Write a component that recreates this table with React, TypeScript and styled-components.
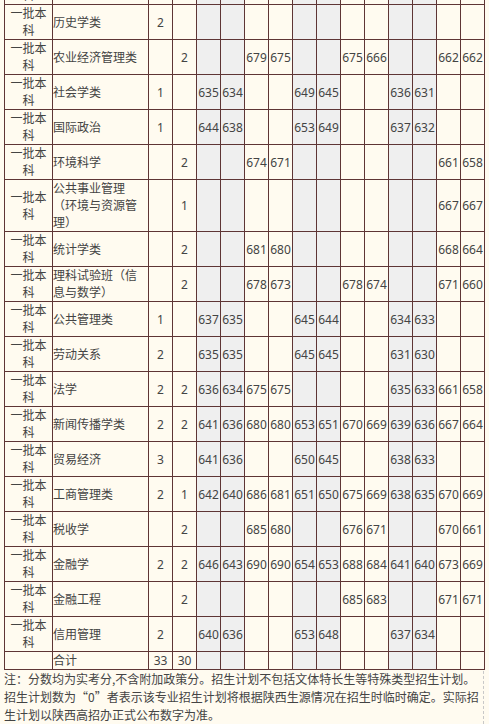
import React from "react";
import styled, { createGlobalStyle } from "styled-components";

const GlobalStyle = createGlobalStyle`
    html, body {
        margin: 0;
        padding: 0;
        background-color: #fffbf0;
    }
    body {
        font-family: "Noto Sans", "Noto Sans CJK SC", sans-serif;
        font-size: 12px;
        color: #444;
    }
`;

const Wrapper = styled.div`
    display: flex;
    flex-direction: column;
    box-sizing: border-box;
    width: 484px;
    min-height: 100vh;
    padding-left: 4px;
    border-right: 1px dashed #c8c8c8;
`;

const Table = styled.table`
    margin-top: -31px;
    border-collapse: collapse;
    table-layout: fixed;
    width: 481px;
    line-height: 17px;
`;

const Cell = styled.td<{ $shade?: boolean }>`
    padding: 0;
    border: 1px solid #5e3535;
    background-color: ${(p) => (p.$shade ? "#efefef" : "#fffbf0")};
    text-align: center;
    vertical-align: middle;
    white-space: nowrap;
    overflow: hidden;
`;

const RegionCell = styled(Cell)`
    white-space: normal;
`;

const MajorCell = styled(Cell)`
    text-align: left;
    white-space: normal;
`;

const Note = styled.p`
    margin: 0;
    font-family: "Noto Sans CJK SC", sans-serif;
    line-height: 18px;
    padding-right: 2px;
`;

type Row = {
    major: React.ReactNode;
    plan: [string, string];
    scores: string[];
};

const none = ["", "", "", "", "", "", "", "", "", "", "", ""];

const rows: Row[] = [
    { major: "哲学类", plan: ["", "2"], scores: none },
    { major: "历史学类", plan: ["2", ""], scores: none },
    { major: "农业经济管理类", plan: ["", "2"], scores: ["", "", "679", "675", "", "", "675", "666", "", "", "662", "662"] },
    { major: "社会学类", plan: ["1", ""], scores: ["635", "634", "", "", "649", "645", "", "", "636", "631", "", ""] },
    { major: "国际政治", plan: ["1", ""], scores: ["644", "638", "", "", "653", "649", "", "", "637", "632", "", ""] },
    { major: "环境科学", plan: ["", "2"], scores: ["", "", "674", "671", "", "", "", "", "", "", "661", "658"] },
    {
        major: (
            <>
                公共事业管理
                <br />
                （环境与资源管理）
            </>
        ),
        plan: ["", "1"],
        scores: ["", "", "", "", "", "", "", "", "", "", "667", "667"],
    },
    { major: "统计学类", plan: ["", "2"], scores: ["", "", "681", "680", "", "", "", "", "", "", "668", "664"] },
    { major: "理科试验班（信息与数学）", plan: ["", "2"], scores: ["", "", "678", "673", "", "", "678", "674", "", "", "671", "660"] },
    { major: "公共管理类", plan: ["1", ""], scores: ["637", "635", "", "", "645", "644", "", "", "634", "633", "", ""] },
    { major: "劳动关系", plan: ["2", ""], scores: ["635", "635", "", "", "645", "645", "", "", "631", "630", "", ""] },
    { major: "法学", plan: ["2", "2"], scores: ["636", "634", "675", "675", "", "", "", "", "635", "633", "661", "658"] },
    { major: "新闻传播学类", plan: ["2", "2"], scores: ["641", "636", "680", "680", "653", "651", "670", "669", "639", "636", "667", "664"] },
    { major: "贸易经济", plan: ["3", ""], scores: ["641", "636", "", "", "650", "645", "", "", "638", "633", "", ""] },
    { major: "工商管理类", plan: ["2", "1"], scores: ["642", "640", "686", "681", "651", "650", "675", "669", "638", "635", "670", "669"] },
    { major: "税收学", plan: ["", "2"], scores: ["", "", "685", "680", "", "", "676", "671", "", "", "670", "661"] },
    { major: "金融学", plan: ["2", "2"], scores: ["646", "643", "690", "690", "654", "653", "688", "684", "641", "640", "673", "669"] },
    { major: "金融工程", plan: ["", "2"], scores: ["", "", "", "", "", "", "685", "683", "", "", "671", "671"] },
    { major: "信用管理", plan: ["2", ""], scores: ["640", "636", "", "", "653", "648", "", "", "637", "634", "", ""] },
];

// gray columns: 文史/理工 pairs alternate
const shaded = (i: number) => Math.floor(i / 2) % 2 === 0;

export default function App() {
    return (
        <>
            <GlobalStyle />
            <Wrapper>
                <Table>
                    <colgroup>
                        <col style={{ width: 48 }} />
                        <col style={{ width: 96 }} />
                        {Array.from({ length: 14 }).map((_, i) => (
                            <col key={i} style={{ width: 24 }} />
                        ))}
                    </colgroup>
                    <tbody>
                        {rows.map((row, r) => (
                            <tr key={r}>
                                <RegionCell>一批本科</RegionCell>
                                <MajorCell>{row.major}</MajorCell>
                                <Cell>{row.plan[0]}</Cell>
                                <Cell>{row.plan[1]}</Cell>
                                {row.scores.map((s, i) => (
                                    <Cell key={i} $shade={shaded(i)}>
                                        {s}
                                    </Cell>
                                ))}
                            </tr>
                        ))}
                        <tr>
                            <Cell />
                            <MajorCell>合计</MajorCell>
                            <Cell>33</Cell>
                            <Cell>30</Cell>
                            {none.map((_, i) => (
                                <Cell key={i} $shade={shaded(i)} />
                            ))}
                        </tr>
                    </tbody>
                </Table>
                <Note>
                    注：分数均为实考分,不含附加政策分。招生计划不包括文体特长生等特殊类型招生计划。招生计划数为“0”者表示该专业招生计划将根据陕西生源情况在招生时临时确定。实际招生计划以陕西高招办正式公布数字为准。
                </Note>
            </Wrapper>
        </>
    );
}
